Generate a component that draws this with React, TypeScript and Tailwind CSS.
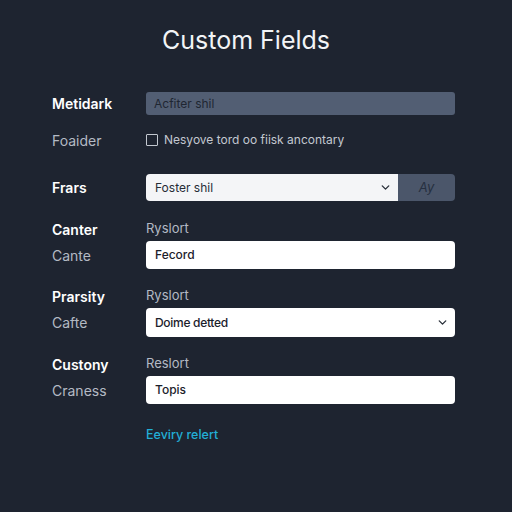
import { ChevronDown } from 'lucide-react';

const font = { fontFamily: 'Inter, "Noto Sans", sans-serif' };

function Label({ children, strong }: { children: React.ReactNode; strong?: boolean }) {
  return (
    <div
      className={`w-[94px] shrink-0 text-[14px] ${
        strong ? 'font-semibold text-white' : 'text-[#b4bac4]'
      }`}
    >
      {children}
    </div>
  );
}

export default function App() {
  return (
    <div className="w-[512px] h-[512px] bg-[#1e2430] pl-[52px] pr-[57px] text-white" style={font}>
      {/* Title */}
      <div className="pt-[24px] h-[56px] pl-[110px] text-[25px] leading-8 text-[#f2f4f7]">Custom Fields</div>

      {/* Metidark */}
      <div className="mt-[36px] flex items-center h-[23px]">
        <Label strong>Metidark</Label>
        <div className="flex-1 h-full rounded-[3px] bg-[#525e73] px-2 flex items-center text-[12px] text-[#1f2632]">
          Acfiter shil
        </div>
      </div>

      {/* Foaider */}
      <div className="mt-[15px] flex items-center h-[20px]">
        <Label>Foaider</Label>
        <div className="flex items-center gap-[6px] text-[12px] text-[#c3c8d0]">
          <span className="w-[12px] h-[12px] border border-[#c3c8d0] rounded-[1px]" />
          Nesyove tord oo fiisk ancontary
        </div>
      </div>

      {/* Frars */}
      <div className="mt-[24px] flex items-center h-[27px]">
        <Label strong>Frars</Label>
        <div className="flex-1 h-full flex">
          <div className="flex-1 rounded-l-[4px] bg-[#f4f5f7] pl-[9px] pr-[6px] flex items-center justify-between text-[12px] text-[#262c36]">
            Foster shil
            <ChevronDown size={13} strokeWidth={2.5} className="text-[#2a303a]" />
          </div>
          <div className="w-[57px] rounded-r-[4px] bg-[#4b566a] flex items-center justify-center text-[13px] italic text-[#263041]">
            Ay
          </div>
        </div>
      </div>

      {/* Canter */}
      <div className="mt-[18px] flex items-center h-[20px]">
        <Label strong>Canter</Label>
        <div className="text-[13px] text-[#b4bac4]">Ryslort</div>
      </div>
      <div className="mt-[2px] flex items-center h-[28px]">
        <Label>Cante</Label>
        <div className="flex-1 h-full rounded-[4px] bg-white pl-[9px] flex items-center text-[12px] font-medium text-[#1b212b]">
          Fecord
        </div>
      </div>

      {/* Prarsity */}
      <div className="mt-[17px] flex items-center h-[20px]">
        <Label strong>Prarsity</Label>
        <div className="text-[13px] text-[#b4bac4]">Ryslort</div>
      </div>
      <div className="mt-[2px] flex items-center h-[29px]">
        <Label>Cafte</Label>
        <div className="flex-1 h-full rounded-[4px] bg-white pl-[9px] pr-[6px] flex items-center justify-between text-[12px] font-medium tracking-[-0.3px] text-[#1b212b]">
          Doime detted
          <ChevronDown size={13} strokeWidth={2.5} className="text-[#2a303a]" />
        </div>
      </div>

      {/* Custony */}
      <div className="mt-[17px] flex items-center h-[20px]">
        <Label strong>Custony</Label>
        <div className="text-[13px] text-[#b4bac4]">Reslort</div>
      </div>
      <div className="mt-[2px] flex items-center h-[28px]">
        <Label>Craness</Label>
        <div className="flex-1 h-full rounded-[4px] bg-white pl-[9px] flex items-center text-[12px] font-medium text-[#1b212b]">
          Topis
        </div>
      </div>

      {/* Link */}
      <div className="mt-[21px] flex items-center h-[20px]">
        <Label>{''}</Label>
        <span className="text-[12.5px] font-medium text-[#22aed6]">Eeviry relert</span>
      </div>
    </div>
  );
}
